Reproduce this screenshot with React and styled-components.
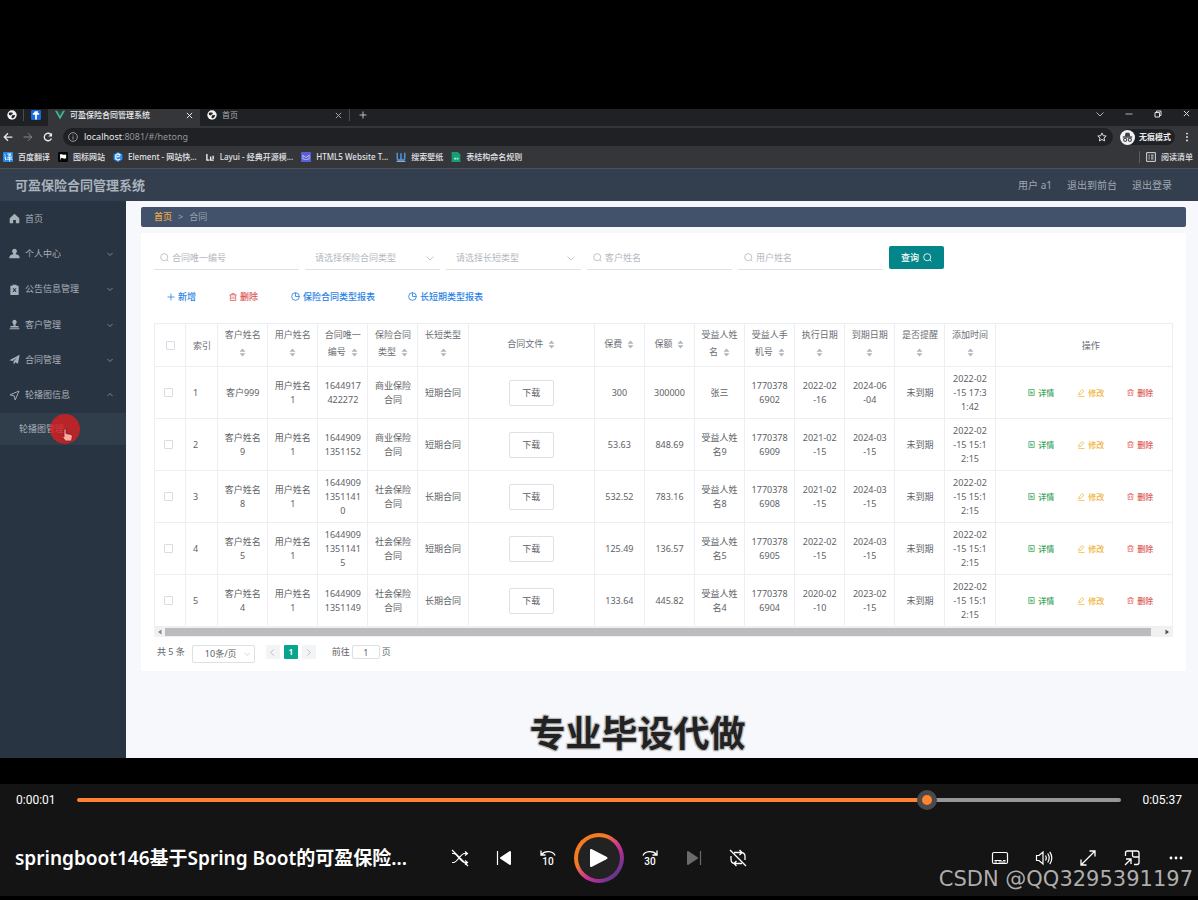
import React from 'react';
import styled, { createGlobalStyle, css } from 'styled-components';

const GlobalStyle = createGlobalStyle`
  * { box-sizing: border-box; }
  body { margin: 0; background: #000; }
  body, button, input, select {
    font-family: "Noto Sans", "Noto Sans CJK SC", sans-serif;
  }
  button { border: 0; padding: 0; background: none; color: inherit; cursor: pointer; }
  input, select { margin: 0; outline: 0; }
  a { color: inherit; text-decoration: none; }
  ul, ol { margin: 0; padding: 0; list-style: none; }
  svg { display: block; flex: none; }
`;

const Page = styled.div`
  position: relative;
  min-height: 100vh;
  display: flex;
  flex-direction: column;
  background: #000;
  padding: 109px 0 4px;
  overflow: hidden;
`;

/* ---------- browser window ---------- */
const Video = styled.section`
  position: relative;
  flex: 1;
  display: flex;
  flex-direction: column;
  margin-bottom: 26px;
  background: #f7f8fb;
`;

const TabStrip = styled.div`
  display: flex;
  height: 17px;
  background: #202124;
  color: #dfe1e5;
  font-size: 8px;
  line-height: 12px;
`;

const PinnedTab = styled.button`
  display: flex;
  justify-content: center;
  width: 24px;
  height: 12px;
  padding-top: 1px;
  border-right: ${(p) => (p.$divider ? '1px solid #4a4b4f' : '0')};
`;

const Tab = styled.div`
  display: flex;
  gap: 5px;
  width: ${(p) => (p.$active ? 152 : 149)}px;
  padding: 0 7px;
  background: ${(p) => (p.$active ? '#35363a' : 'transparent')};
  color: ${(p) => (p.$active ? '#eceef0' : '#a6a9ad')};
  font-weight: ${(p) => (p.$active ? 500 : 400)};
  > span { flex: 1; white-space: nowrap; }
  > svg { margin-top: 1px; }
`;

const TabButton = styled.button`
  display: flex;
  height: 12px;
  align-items: center;
  padding: 0 9px;
  border-left: 1px solid #4a4b4f;
`;

const TabClose = styled.button`
  display: flex;
  height: 12px;
  align-items: center;
`;

const WindowControls = styled.div`
  display: flex;
  margin-left: auto;
  gap: 21px;
  height: 9px;
  padding-right: 8px;
`;

const Toolbar = styled.div`
  display: flex;
  align-items: center;
  height: 22px;
  padding: 0 6px 0 3px;
  background: #35363a;
  color: #e8eaed;
`;

const NavButtons = styled.div`
  display: flex;
  gap: 10px;
  width: 60px;
`;

const Address = styled.div`
  flex: 1;
  display: flex;
  align-items: center;
  gap: 6px;
  height: 18px;
  padding: 0 6px 0 5px;
  border-radius: 9px;
  background: #202124;
`;

const Url = styled.span`
  flex: 1;
  color: #92969b;
  font-size: 9px;
  line-height: 18px;
  b { color: #e8eaed; font-weight: 400; }
`;

const Incognito = styled.div`
  display: flex;
  align-items: center;
  gap: 4px;
  height: 16px;
  margin: 0 7px 0 7px;
  padding-right: 4px;
  border-radius: 8px;
  background: #202124;
  font-size: 8px;
  line-height: 16px;
  font-weight: 600;
`;

const Bookmarks = styled.nav`
  display: flex;
  align-items: center;
  gap: 8px;
  height: 21px;
  padding: 0 5px 2px 3px;
  border-bottom: 1px solid #4b5259;
  background: #35363a;
  color: #e2e4e7;
  font-size: 8px;
  line-height: 12px;
  font-weight: 500;
`;

const Bookmark = styled.a`
  display: flex;
  align-items: center;
  gap: 5px;
  white-space: nowrap;
  ${(p) => p.$last && css`
    margin-left: auto;
    padding-left: 6px;
    border-left: 1px solid #5b5d61;
  `}
`;

/* ---------- application ---------- */
const AppHeader = styled.header`
  display: flex;
  align-items: center;
  gap: 15px;
  height: 32px;
  padding: 0 26px 0 15px;
  background: #333f4e;
  color: #a0a8b2;
  font-size: 10px;
  line-height: 16px;
`;

const AppTitle = styled.h1`
  flex: 1;
  margin: 0;
  color: #a9b1bb;
  font-size: 13px;
  line-height: 20px;
  font-weight: 600;
`;

const AppBody = styled.div`
  flex: 1;
  display: flex;
`;

const Sidebar = styled.nav`
  width: 126px;
  flex: none;
  background: #283442;
  color: #a9b0b8;
  font-size: 9px;
  line-height: 14px;
`;

const Menu = styled.ul`
  display: grid;
  grid-auto-rows: 1fr;
  height: 212px;
`;

const MenuItem = styled.li`
  display: flex;
  align-items: center;
  gap: 5px;
  padding: 0 13px 0 9px;
  a { flex: 1; }
`;

const SubMenuItem = styled.a`
  position: relative;
  display: flex;
  align-items: center;
  height: 32px;
  padding-left: 19px;
  background: #303d4b;
`;

const ClickSpot = styled.span`
  position: absolute;
  left: 50px;
  top: 1px;
  width: 30px;
  height: 30px;
  border-radius: 50%;
  background: rgba(214, 32, 34, 0.82);
  svg { position: absolute; left: 11px; top: 14px; }
`;

const Content = styled.main`
  flex: 1;
  min-width: 0;
  padding: 6px 12px 0 15px;
`;

const Crumbs = styled.ol`
  display: flex;
  align-items: center;
  gap: 6px;
  height: 20px;
  padding-left: 13px;
  border-radius: 2px;
  background: #42526a;
  color: #97a3b2;
  font-size: 9px;
  line-height: 14px;
  li:first-child { color: #eda347; font-weight: 500; }
`;

const Card = styled.section`
  margin-top: 6px;
  padding: 13px 13px 8px;
  background: #fff;
  color: #606266;
  font-size: 9px;
  line-height: 14px;
`;

const Filters = styled.form`
  display: flex;
  gap: 6px;
`;

const Field = styled.label`
  display: flex;
  align-items: center;
  gap: 3px;
  width: ${(p) => (p.$narrow ? 135 : 145)}px;
  height: 24px;
  padding: ${(p) => (p.$narrow ? '0 6px 0 10px' : '0 6px')};
  border-bottom: 1px solid #dfe1e6;
  color: #b4b8bf;
  input, select {
    flex: 1;
    min-width: 0;
    padding: 0;
    border: 0;
    background: none;
    color: #b4b8bf;
    font-size: 9px;
    line-height: 14px;
    appearance: none;
  }
  input::placeholder { color: #b4b8bf; opacity: 1; }
`;

const SearchButton = styled.button`
  display: flex;
  align-items: center;
  justify-content: center;
  gap: 4px;
  width: 55px;
  height: 23px;
  border-radius: 2px;
  background: #04858a;
  color: #fff;
  font-size: 9px;
  line-height: 14px;
  font-weight: 500;
`;

const Actions = styled.div`
  display: flex;
  gap: 7px;
  margin: 15px 0;
`;

const ActionButton = styled.button`
  display: flex;
  align-items: center;
  gap: 3px;
  height: 23px;
  padding: 0 13px;
  color: ${(p) => (p.$danger ? '#d9534f' : '#2a83e4')};
  font-size: 9px;
  line-height: 14px;
  font-weight: 500;
`;

const Table = styled.table`
  width: 100%;
  table-layout: fixed;
  border-collapse: collapse;
  th, td {
    padding: 0;
    border: 1px solid #eceef3;
    text-align: center;
    white-space: pre;
    font-weight: 400;
  }
  th { height: 43px; line-height: 17px; color: #6b6e75; }
  th:nth-child(n + 3):not(:last-child) { padding-bottom: 4px; }
  td { height: 52px; }
  td:first-child { padding-right: 3px; }
  tr > :nth-child(2) { text-align: left; padding-left: 7px; }
  tr > :last-child { padding-left: 14px; }
`;

const Check = styled.input`
  appearance: none;
  display: block;
  width: 9px;
  height: 9px;
  margin: 0 auto;
  border: 1px solid #d9dce3;
  border-radius: 1px;
  background: #fff;
`;

const Sortable = styled.span`
  display: inline-flex;
  vertical-align: middle;
  margin-left: ${(p) => (p.$alone ? 0 : 5)}px;
`;

const DownloadButton = styled.button`
  width: 45px;
  height: 26px;
  border: 1px solid #dfe1e6;
  border-radius: 2px;
  color: #606266;
  font-size: 9px;
  line-height: 14px;
`;

const RowActions = styled.div`
  display: flex;
  justify-content: center;
  gap: 23px;
`;

const tones = { view: '#3aa35c', edit: '#f0b440', remove: '#dd5a5a' };
const RowAction = styled.button`
  display: flex;
  align-items: center;
  gap: 3px;
  color: ${(p) => tones[p.$tone]};
  font-size: 8px;
  line-height: 14px;
  font-weight: 500;
`;

const ScrollTrack = styled.div`
  display: flex;
  align-items: center;
  gap: 3px;
  height: 10px;
  padding: 0 3px;
  background: #f1f1f2;
  color: #77797d;
`;

const ScrollThumb = styled.div`
  flex: 1;
  height: 8px;
  margin-right: 11px;
  background: #bcbcbe;
`;

const Pager = styled.div`
  display: flex;
  align-items: flex-start;
  gap: 4px;
  padding: 8px 0 0 3px;
`;

const PageSize = styled.label`
  display: flex;
  align-items: center;
  width: 63px;
  height: 18px;
  margin: 0 7px 0 3px;
  padding: 0 4px 0 12px;
  border: 1px solid #dcdfe6;
  border-radius: 2px;
  color: #b4b8bf;
  select {
    flex: 1;
    min-width: 0;
    padding: 0;
    border: 0;
    background: none;
    color: #606266;
    font-size: 9px;
    line-height: 14px;
    appearance: none;
  }
`;

const PageButton = styled.button`
  display: flex;
  align-items: center;
  justify-content: center;
  width: 14px;
  height: 14px;
  border-radius: 1px;
  background: ${(p) => (p.$current ? '#08a58c' : '#f3f4f6')};
  color: ${(p) => (p.$current ? '#fff' : '#a9adb5')};
  font-size: 9px;
  font-weight: 600;
  line-height: 14px;
`;

const Jump = styled.label`
  display: flex;
  gap: 2px;
  margin-left: 12px;
  input {
    width: 28px;
    height: 14px;
    padding: 0;
    border: 1px solid #dcdfe6;
    border-radius: 2px;
    color: #606266;
    font-size: 9px;
    text-align: center;
  }
`;

const Caption = styled.p`
  position: absolute;
  left: 0;
  right: 0;
  bottom: 0;
  margin: 0;
  padding-left: 77px;
  color: #222;
  font-family: "Noto Sans CJK SC", sans-serif;
  font-size: 36px;
  line-height: 53px;
  font-weight: 700;
  text-align: center;
  text-shadow: 1px 1px 1px #b9b9b9, -1px -1px 1px #b9b9b9, 1px -1px 1px #b9b9b9, -1px 1px 1px #b9b9b9;
  pointer-events: none;
`;

/* ---------- player ---------- */
const Player = styled.footer`
  height: 112px;
  background: #141414;
  color: #fff;
`;

const Timeline = styled.div`
  display: flex;
  align-items: center;
  height: 32px;
  padding: 0 16px;
  font-size: 12px;
  line-height: 16px;
  span { width: 61px; font-family: Roboto, "Noto Sans", sans-serif; }
  span:last-child { text-align: right; }
`;

const Seek = styled.input`
  appearance: none;
  flex: 1;
  min-width: 0;
  height: 4px;
  border-radius: 2px;
  background: linear-gradient(to right, #ff8330 81%, #969696 81%);
  &::-webkit-slider-thumb {
    appearance: none;
    width: 20px;
    height: 20px;
    border: 5px solid #4a4a4a;
    border-radius: 50%;
    background: #ff8330;
  }
`;

const Controls = styled.div`
  display: grid;
  grid-template-columns: 1fr auto 1fr;
  align-items: center;
  height: 84px;
`;

const MediaTitle = styled.h2`
  margin: 0;
  padding-left: 15px;
  overflow: hidden;
  font-size: 19px;
  line-height: 28px;
  font-weight: 600;
  white-space: nowrap;
`;

const ButtonRow = styled.div`
  display: flex;
  align-items: center;
  justify-content: flex-end;
`;

const IconButton = styled.button`
  display: flex;
  align-items: center;
  justify-content: center;
  width: 44px;
  height: 40px;
  color: ${(p) => (p.$dim ? '#6b6b6b' : '#fff')};
`;

const PlayButton = styled.button`
  display: flex;
  align-items: center;
  justify-content: center;
  width: 50px;
  height: 50px;
  margin: 0 4px;
  border: 4px solid transparent;
  border-radius: 50%;
  background:
    linear-gradient(#222, #222) padding-box,
    linear-gradient(135deg, #f47b20 36%, #e0506e 46%, #bd3096 62%, #67348f 84%) border-box;
`;

const Watermark = styled.span`
  position: absolute;
  right: 5px;
  bottom: 8px;
  color: rgba(190, 190, 190, 0.92);
  font-family: "DejaVu Sans", sans-serif;
  font-size: 21px;
  line-height: 26px;
  pointer-events: none;
`;

/* ---------- icons ---------- */
const Icon = ({ size = 10, box = 16, sw = 1.5, children, height, ...rest }) => (
  <svg width={size} height={height || size} viewBox={`0 0 ${box} ${box}`} fill="none" stroke="currentColor" strokeWidth={sw} aria-hidden="true" {...rest}>
    {children}
  </svg>
);

const Globe = () => (
  <Icon size={10} stroke="none">
    <circle cx="8" cy="8" r="7.5" fill="#f1f3f4" />
    <path d="M3 5c2-1.500 4-.5 5.500-.5s1 2-.5 2.500-2.500 2-3.500 1.500S2.500 6.500 3 5zM8 8.500l5-.5-1 3-3 2.500-2-1.500z" fill="#202124" />
  </Icon>
);
const Close = ({ size = 7 }) => <Icon size={size} sw={2.2}><path d="M2 2l12 12M14 2L2 14" /></Icon>;
const Chevron = ({ dir = 'down', size = 7, sw = 1.8 }) => {
  const d = { down: 'M1 5l7 7 7-7', up: 'M1 11l7-7 7 7', left: 'M11 1L4 8l7 7', right: 'M5 1l7 7-7 7' }[dir];
  return <Icon size={size} sw={sw}><path d={d} /></Icon>;
};
const Search = ({ size = 9 }) => <Icon size={size} sw={1.5}><circle cx="7.500" cy="7.500" r="6.300" /><path d="M12 12l3 3" /></Icon>;
const Trash = ({ size = 8 }) => (
  <Icon size={size} sw={1.5}><path d="M1 3.700h14M5.500 3.500V1.200h5v2.300M2.700 4v11h10.600V4M6 7v5M10 7v5" /></Icon>
);
const Plus = () => <Icon size={8} sw={1.6}><path d="M8 1v14M1 8h14" /></Icon>;
const Pie = () => <Icon size={9} sw={1.5}><circle cx="8" cy="8" r="6.800" /><path d="M8 1v7h7" /></Icon>;
const Doc = () => <Icon size={7} sw={1.8}><path d="M2 1h12v14H2zM5 5h3M5 8h6M5 11h6" /></Icon>;
const Pen = () => <Icon size={8} sw={1.5}><path d="M3 12l1-4 6-7 3.500 3-6 7-4.500 1zM3 15h12" /></Icon>;
const SortMark = () => (
  <svg width="7" height="9" viewBox="0 0 7 9" aria-hidden="true" fill="#b1b5bd"><path d="M3.500 0.500L6.500 3.700H.5zM3.500 8.500L6.500 5.300H.5z" /></svg>
);
const Arrow = ({ left }) => (
  <svg width="5" height="6" viewBox="0 0 5 6" aria-hidden="true" fill={left ? '#85878a' : '#4c4e52'}><path d={left ? 'M4.500 .5v5L1 3z' : 'M.5 .5v5L4 3z'} /></svg>
);

const menuIcons = {
  home: <path d="M8 1L1 7.500V15h5v-5h4v5h5V7.500z" />,
  user: <path d="M8 1a3.700 3.700 0 0 1 2 6.700V9c3 .5 5.500 1.500 5.500 6H.5c0-4.500 2.500-5.500 5.500-6V7.700A3.700 3.700 0 0 1 8 1z" />,
  notice: <path fillRule="evenodd" d="M2 2.500h3V1h6v1.500h3V16H2zM5 6l2 2.700L5 11.500h1.700L8 9.700l1.300 1.800H11L9 8.700 11 6H9.300L8 7.700 6.700 6z" />,
  customer: <path d="M8 1a3.500 3.500 0 0 1 1.500 6.500V10H14v2.500H2V10h4.500V7.500A3.500 3.500 0 0 1 8 1zM1 13.500h14V15H1z" />,
  plane: <path d="M.5 9L15.500 1 13 14l-4-2-2 3.500-.5-4.500L12 5l-7 5z" />,
};

const Shuffle = () => (
  <Icon size={18} box={18} sw={1.2}>
    <path d="M1 4.500h1.500c4 0 7 9 11 9H16M1 13.500h1.500c4 0 7-9 11-9H16M14 2.500l2.500 2-2.500 2M14 11.500l2.500 2-2.500 2M1 1l16 16" />
  </Icon>
);
const Previous = () => (
  <Icon size={16} sw={1.2}><path d="M1.500 1v14" /><path d="M14 2v12L5 8z" fill="currentColor" strokeWidth="2" strokeLinejoin="round" /></Icon>
);
const Next = () => (
  <Icon size={16} sw={1.2}><path d="M14.500 1v14" /><path d="M2 2v12l9-6z" fill="currentColor" strokeWidth="2" strokeLinejoin="round" /></Icon>
);
const Skip = ({ value, forward }) => (
  <svg width="18" height="22" viewBox="0 0 18 22" fill="none" stroke="currentColor" strokeWidth="1.300" aria-hidden="true">
    <path d={forward ? 'M2 8.500C4 4 12 3 15.500 7.500M16 3.500V8h-4.500' : 'M16 8.500C14 4 6 3 2.500 7.500M2 3.500V8h4.500'} />
    <text x="9" y="18" textAnchor="middle" fill="currentColor" stroke="none" fontSize="10" fontWeight="500" fontFamily="Roboto, sans-serif">{value}</text>
  </svg>
);
const Repeat = () => (
  <Icon size={18} box={18} sw={1.3}>
    <path d="M5 3.500h7.500a4 4 0 0 1 3.500 4V11M10.500 1L13 3.500 10.500 6M13 14.500H5.500a4 4 0 0 1-3.500-4V7M7.500 12L5 14.500 7.500 17M1 1l16 16" />
  </Icon>
);
const Subtitles = () => (
  <Icon size={18} box={18} sw={1.2}><rect x="1.500" y="3.500" width="15" height="11" rx="1.500" /><path d="M3.500 11.500h7M12 11.500h2.500M3.500 13h2.500M7.500 13h7" strokeWidth="1" /></Icon>
);
const Volume = () => (
  <Icon size={18} box={18} sw={1.200}>
    <path d="M1.500 6.500H4L8 3v12l-4-3.500H1.500zM10.500 6.500q1.500 2.500 0 5M12.700 4.500q3 4.500 0 9M14.800 2.800q4 6.200 0 12.400" />
  </Icon>
);
const Expand = () => <Icon size={18} box={18} sw={1.300}><path d="M2 16L16 2M10.500 2H16v5.500M2 10.500V16h5.500" /></Icon>;
const MiniPlayer = () => (
  <Icon size={18} box={18} sw={1.300}><path d="M2.500 7V4q0-2 2-2h9.500q2 0 2 2v9.500q0 2-2 2h-3M9.500 2v4.500q0 1.500 1.500 1.500h5M2 16l6-6M3 10h5v5" /></Icon>
);
const More = () => <Icon size={16} stroke="none"><g fill="currentColor"><circle cx="3" cy="8" r="1.400" /><circle cx="8" cy="8" r="1.400" /><circle cx="13" cy="8" r="1.400" /></g></Icon>;

const bookmarks = [
  ['百度翻译', <Icon stroke="none"><rect width="16" height="16" rx="1" fill="#2387e8" /><path d="M2 4l2 1M2 8h2v5l1-1M7 3h6l-5 4M9 4l5 3M7 9h7M6 11.500h9M10.500 7v8" stroke="#fff" strokeWidth="1.400" /></Icon>],
  ['图标网站', <Icon stroke="none"><rect width="16" height="16" rx="2" fill="#050505" /><path d="M3 4c3-2 5 2 10 0v6c-4 2-6-1-8 0l-1 4z" fill="#fff" /></Icon>],
  ['Element - 网站快...', <Icon stroke="none"><path d="M8 0l7 4v8l-7 4-7-4V4z" fill="#2b8ff0" /><path d="M12 4.500L8 3 4.500 5v6L8 13l3.500-2M6 8l5.500-2" stroke="#fff" strokeWidth="1.800" /></Icon>],
  ['Layui - 经典开源模...', <Icon stroke="#f1f1f1" sw={2.200}><path d="M3 3v10h4M9 7v6h5M13 6v5" /></Icon>],
  ['HTML5 Website T...', <Icon stroke="none"><rect width="16" height="16" rx="1" fill="#5a5fd8" /><path d="M3 5l5 4 5-4v6l-4 1H7l-4-1z" stroke="#d3cff5" strokeWidth="1.300" /></Icon>],
  ['搜索壁纸', <Icon stroke="#4b8fd6" sw={2.600}><path d="M2 1v8q0 4 3 4t3-4V2v7q0 4 3 4t3-4V1" /><path d="M1 15h14" stroke="#d7e6f5" strokeWidth="1.200" /></Icon>],
  ['表结构命名规则', <Icon stroke="none"><path d="M1 0h10l4 4v12H1z" fill="#13a077" /><path d="M5 9h3v3H5zM9 9h3v3H9z" fill="#b7e6d6" /></Icon>],
];

const menu = [
  ['首页', 'home'],
  ['个人中心', 'user', 'down'],
  ['公告信息管理', 'notice', 'down'],
  ['客户管理', 'customer', 'down'],
  ['合同管理', 'plane', 'down'],
  ['轮播图信息', 'send', 'up'],
];

/* Label, whether the column can be sorted, and a width where it is not the usual one.
   A label that ends in a line break puts its sort mark on a line of its own. */
const columns = [
  ['客户姓名\n', true], ['用户姓名\n', true], ['合同唯一\n编号', true], ['保险合同\n类型', true], ['长短类型\n', true],
  ['合同文件', true, 126], ['保费', true], ['保额', true], ['受益人姓\n名', true], ['受益人手\n机号', true],
  ['执行日期\n', true], ['到期日期\n', true], ['是否提醒\n', true], ['添加时间\n', true], ['操作', false, 177],
];

const rows = [
  ['客户999', '用户姓名\n1', '1644917\n422272', '商业保险\n合同', '短期合同', null, '300', '300000', '张三', '1770378\n6902', '2022-02\n-16', '2024-06\n-04', '未到期', '2022-02\n-15 17:3\n1:42'],
  ['客户姓名\n9', '用户姓名\n1', '1644909\n1351152', '商业保险\n合同', '短期合同', null, '53.63', '848.69', '受益人姓\n名9', '1770378\n6909', '2021-02\n-15', '2024-03\n-15', '未到期', '2022-02\n-15 15:1\n2:15'],
  ['客户姓名\n8', '用户姓名\n1', '1644909\n1351141\n0', '社会保险\n合同', '长期合同', null, '532.52', '783.16', '受益人姓\n名8', '1770378\n6908', '2021-02\n-15', '2024-03\n-15', '未到期', '2022-02\n-15 15:1\n2:15'],
  ['客户姓名\n5', '用户姓名\n1', '1644909\n1351141\n5', '社会保险\n合同', '短期合同', null, '125.49', '136.57', '受益人姓\n名5', '1770378\n6905', '2022-02\n-15', '2024-03\n-15', '未到期', '2022-02\n-15 15:1\n2:15'],
  ['客户姓名\n4', '用户姓名\n1', '1644909\n1351149', '社会保险\n合同', '长期合同', null, '133.64', '445.82', '受益人姓\n名4', '1770378\n6904', '2020-02\n-10', '2023-02\n-15', '未到期', '2022-02\n-15 15:1\n2:15'],
];

function BrowserChrome() {
  return (
    <>
      <TabStrip>
        <PinnedTab $divider aria-label="网页"><Globe /></PinnedTab>
        <PinnedTab aria-label="工具">
          <Icon stroke="none"><rect width="16" height="16" rx="2" fill="#1769e0" /><path d="M8 2v13M3 6h10M5 4l6-1" stroke="#fff" strokeWidth="2.800" /></Icon>
        </PinnedTab>
        <Tab $active>
          <Icon stroke="none"><path d="M0 1h3.500L8 9l4.500-8H16L8 15z" fill="#41b883" /><path d="M3.500 1H6l2 3.500L10 1h2.500L8 9z" fill="#35495e" /></Icon>
          <span>可盈保险合同管理系统</span>
          <TabClose aria-label="关闭"><Close /></TabClose>
        </Tab>
        <Tab>
          <Globe />
          <span>首页</span>
          <TabClose aria-label="关闭"><Close /></TabClose>
        </Tab>
        <TabButton aria-label="新建标签页"><Plus /></TabButton>
        <WindowControls>
          <button aria-label="标签页列表"><Chevron size={8} sw={1.500} /></button>
          <button aria-label="最小化"><Icon size={8}><path d="M1 8h14" /></Icon></button>
          <button aria-label="还原"><Icon size={8} sw={2}><path d="M2 5h9v9H2zM5 5V2h9v9h-3" /></Icon></button>
          <button aria-label="关闭窗口"><Close /></button>
        </WindowControls>
      </TabStrip>
      <Toolbar>
        <NavButtons>
          <button aria-label="后退"><Icon sw={2}><path d="M15 8H2M8 2L2 8l6 6" /></Icon></button>
          <button aria-label="前进"><Icon sw={1.600} stroke="#85888d"><path d="M1 8h13M8 2l6 6-6 6" /></Icon></button>
          <button aria-label="刷新"><Icon sw={2.200}><path d="M13.500 10.500A6 6 0 1 1 12.500 4" /><path d="M14.500 1v6h-6z" fill="currentColor" stroke="none" /></Icon></button>
        </NavButtons>
        <Address>
          <Icon size={10} stroke="#a5a8ac" sw={1.400}><circle cx="8" cy="8" r="7" /><path d="M8 7v5M8 4v1.500" /></Icon>
          <Url><b>localhost</b>:8081/#/hetong</Url>
          <Icon size={10}><path d="M8 1.500l2 4.400 4.700.5-3.500 3.200 1 4.700L8 11.900l-4.200 2.400 1-4.700L1.300 6.400 6 5.900z" /></Icon>
        </Address>
        <Incognito>
          <Icon size={15} stroke="none"><circle cx="8" cy="8" r="8" fill="#f1f3f4" /><path d="M3 7.500h10" stroke="#3c4043" /><path d="M5 7l1-4h4l1 4z" fill="#3c4043" /><g stroke="#3c4043" strokeWidth="1.200"><circle cx="5.500" cy="10.500" r="1.700" /><circle cx="10.500" cy="10.500" r="1.700" /></g></Icon>
          无痕模式
        </Incognito>
        <button aria-label="更多"><Icon stroke="none" size={10}><g fill="currentColor"><circle cx="8" cy="2.500" r="1.500" /><circle cx="8" cy="8" r="1.500" /><circle cx="8" cy="13.500" r="1.500" /></g></Icon></button>
      </Toolbar>
      <Bookmarks>
        {bookmarks.map(([name, icon]) => <Bookmark key={name} href="#">{icon}{name}</Bookmark>)}
        <Bookmark $last href="#"><Icon><path d="M1 1h14v14H1zM4 5h2M8 5h4M4 8h2M8 8h4M4 11h2M8 11h4" /></Icon>阅读清单</Bookmark>
      </Bookmarks>
    </>
  );
}

function Side() {
  return (
    <Sidebar>
      <Menu>
        {menu.map(([label, icon, dir]) => (
          <MenuItem key={label}>
            {icon === 'send'
              ? <Icon size={11}><path d="M1.500 7L14.500 1.500 9 14.500 7.500 8.500z" strokeWidth="1.400" /></Icon>
              : <Icon size={11} stroke="none"><g fill="currentColor">{menuIcons[icon]}</g></Icon>}
            <a href="#">{label}</a>
            {dir && <Chevron dir={dir} size={6} />}
          </MenuItem>
        ))}
      </Menu>
      <SubMenuItem href="#">
        轮播图管理
        <ClickSpot>
          <svg width="12" height="14" viewBox="0 0 12 14" fill="#ffaaa2" stroke="#7c1d20" strokeWidth="0.800" aria-hidden="true">
            <path d="M3 9V1.500q1-1.500 2 0V5.500l5 1q1.500.3 1.300 2L10.500 13H4.500L1 8.500q0-1.300 2 .5z" />
          </svg>
        </ClickSpot>
      </SubMenuItem>
    </Sidebar>
  );
}

function ContractTable() {
  return (
    <Table>
      <colgroup>
        <col style={{ width: 31 }} />
        <col style={{ width: 32 }} />
        {columns.map(([label, , width = 50]) => <col key={label} style={{ width }} />)}
      </colgroup>
      <thead>
        <tr>
          <th><Check type="checkbox" aria-label="全选" /></th>
          <th>索引</th>
          {columns.map(([label, sortable]) => (
            <th key={label}>{label}{sortable && <Sortable $alone={label.endsWith('\n')}><SortMark /></Sortable>}</th>
          ))}
        </tr>
      </thead>
      <tbody>
        {rows.map((row, i) => (
          <tr key={i}>
            <td><Check type="checkbox" aria-label={`选择 ${i + 1}`} /></td>
            <td>{i + 1}</td>
            {row.map((cell, j) => <td key={j}>{cell === null ? <DownloadButton>下载</DownloadButton> : cell}</td>)}
            <td>
              <RowActions>
                <RowAction $tone="view"><Doc />详情</RowAction>
                <RowAction $tone="edit"><Pen />修改</RowAction>
                <RowAction $tone="remove"><Trash size={7} />删除</RowAction>
              </RowActions>
            </td>
          </tr>
        ))}
      </tbody>
    </Table>
  );
}

export default function App() {
  return (
    <Page>
      <GlobalStyle />
      <Video>
        <BrowserChrome />
        <AppHeader>
          <AppTitle>可盈保险合同管理系统</AppTitle>
          <span>用户 a1</span>
          <a href="#">退出到前台</a>
          <a href="#">退出登录</a>
        </AppHeader>
        <AppBody>
          <Side />
          <Content>
            <Crumbs><li>首页</li><li>&gt;</li><li>合同</li></Crumbs>
            <Card>
              <Filters onSubmit={(e) => e.preventDefault()}>
                <Field><Search /><input aria-label="合同唯一编号" placeholder="合同唯一编号" /></Field>
                <Field $narrow><select aria-label="保险合同类型"><option>请选择保险合同类型</option></select><Chevron size={8} sw={1.500} /></Field>
                <Field $narrow><select aria-label="长短类型"><option>请选择长短类型</option></select><Chevron size={8} sw={1.500} /></Field>
                <Field><Search /><input aria-label="客户姓名" placeholder="客户姓名" /></Field>
                <Field><Search /><input aria-label="用户姓名" placeholder="用户姓名" /></Field>
                <SearchButton>查询<Search /></SearchButton>
              </Filters>
              <Actions>
                <ActionButton><Plus />新增</ActionButton>
                <ActionButton $danger><Trash />删除</ActionButton>
                <ActionButton><Pie />保险合同类型报表</ActionButton>
                <ActionButton><Pie />长短期类型报表</ActionButton>
              </Actions>
              <ContractTable />
              <ScrollTrack><Arrow left /><ScrollThumb /><Arrow /></ScrollTrack>
              <Pager>
                <span>共 5 条</span>
                <PageSize><select aria-label="每页条数"><option>10条/页</option></select><Chevron size={6} sw={1.500} /></PageSize>
                <PageButton aria-label="上一页"><Chevron dir="left" /></PageButton>
                <PageButton $current>1</PageButton>
                <PageButton aria-label="下一页"><Chevron dir="right" /></PageButton>
                <Jump>前往<input defaultValue="1" />页</Jump>
              </Pager>
            </Card>
          </Content>
        </AppBody>
        <Caption>专业毕设代做</Caption>
      </Video>
      <Player>
        <Timeline>
          <span>0:00:01</span>
          <Seek type="range" min="0" max="1000" defaultValue="820" aria-label="播放进度" />
          <span>0:05:37</span>
        </Timeline>
        <Controls>
          <MediaTitle>springboot146基于Spring Boot的可盈保险...</MediaTitle>
          <ButtonRow>
            <IconButton aria-label="随机播放"><Shuffle /></IconButton>
            <IconButton aria-label="上一个"><Previous /></IconButton>
            <IconButton aria-label="后退 10 秒"><Skip value="10" /></IconButton>
            <PlayButton aria-label="播放"><Icon size={20} box={20} sw={2}><path d="M2 2v16l15.500-8z" fill="currentColor" strokeLinejoin="round" /></Icon></PlayButton>
            <IconButton aria-label="前进 30 秒"><Skip value="30" forward /></IconButton>
            <IconButton $dim aria-label="下一个"><Next /></IconButton>
            <IconButton aria-label="循环"><Repeat /></IconButton>
          </ButtonRow>
          <ButtonRow>
            <IconButton aria-label="字幕"><Subtitles /></IconButton>
            <IconButton aria-label="音量"><Volume /></IconButton>
            <IconButton aria-label="全屏"><Expand /></IconButton>
            <IconButton aria-label="迷你播放器"><MiniPlayer /></IconButton>
            <IconButton aria-label="更多选项"><More /></IconButton>
          </ButtonRow>
        </Controls>
      </Player>
      <Watermark>CSDN @QQ3295391197</Watermark>
    </Page>
  );
}
